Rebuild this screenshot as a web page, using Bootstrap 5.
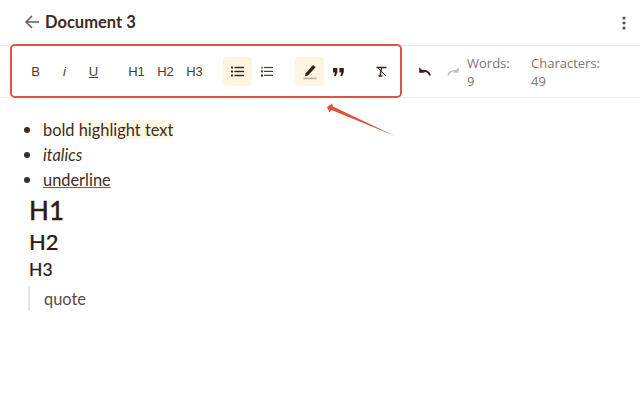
<!DOCTYPE html>
<html lang="en">
<head>
<meta charset="utf-8">
<title>Document 3</title>
<link href="https://cdn.jsdelivr.net/npm/bootstrap@5.3.0/dist/css/bootstrap.min.css" rel="stylesheet">
<style>
html,body{height:100%;}
body{font-family:"Lato","Noto Sans",sans-serif;color:#33221a;background:#fff;overflow:hidden;position:relative;}
.top-bar{height:45px;padding:0 14px 0 24px;}
.top-title{font-size:16.5px;font-weight:700;color:#3a2a22;margin:0 0 0 5px;font-family:"Lato",sans-serif;}
.tool-bar{height:53px;padding-left:21px;border-top:1px solid #efefef;border-bottom:1px solid #efefef;}
.tool-group{display:flex;margin-right:14px;}
.tool-group.tail{margin-right:-1px;}
.tb{width:29px;height:29px;border-radius:4px;display:flex;align-items:center;justify-content:center;font-family:"Liberation Sans",sans-serif;font-size:13px;color:#4a3b33;}
.tb.on{background:#fdf5e0;}
.stats{font-family:"Open Sans",sans-serif;font-size:13px;line-height:18px;color:#7b7674;width:64px;}
.stats.wide{width:90px;}
.doc-body{padding:19px 29px 0;font-size:16.4px;color:#3d2c23;}
.doc-list{padding-left:14px;margin:0;line-height:25px;}
.doc-list li{height:25px;}
.doc-list li::marker{font-size:18px;}
.hl{background:#fdf8e3;}
.under-line{text-decoration:underline;text-decoration-color:#6d5e56;}
.h-a{font-size:26px;font-weight:500;line-height:34px;margin:1px 0 0;color:#2f1c12;-webkit-text-stroke:.3px #2f1c12;}
.h-b{font-size:22px;font-weight:500;line-height:28px;margin:1px 0 0;color:#2f1c12;-webkit-text-stroke:.2px #2f1c12;}
.h-c{font-size:17.5px;font-weight:500;line-height:22px;margin:3px 0 0;color:#2f1c12;-webkit-text-stroke:.15px #2f1c12;}
.quote-box{margin:5px 0 0 -1px;border-left:2px solid #e3e3e3;padding:0 0 0 14px;line-height:25px;color:#5a4a42;}
.red-frame{position:absolute;left:10px;top:44px;width:392px;height:54px;border:2px solid #e0524a;border-radius:5px;pointer-events:none;}
.red-arrow{position:absolute;left:320px;top:100px;}
</style>
</head>
<body>
<header class="top-bar d-flex align-items-center justify-content-between">
  <div class="d-flex align-items-center">
    <svg width="16" height="16" viewBox="0 0 16 16" fill="none" stroke="#6b5f59" stroke-width="1.6"><path d="M15 8H2M8 2L2 8l6 6"/></svg>
    <h1 class="top-title">Document 3</h1>
  </div>
  <svg width="4" height="14" viewBox="0 0 4 14" fill="#5a4c45"><circle cx="2" cy="2" r="1.6"/><circle cx="2" cy="7" r="1.6"/><circle cx="2" cy="12" r="1.6"/></svg>
</header>
<div class="tool-bar d-flex align-items-center">
  <div class="tool-group">
    <div class="tb">B</div><div class="tb fst-italic">i</div><div class="tb text-decoration-underline">U</div>
  </div>
  <div class="tool-group">
    <div class="tb">H1</div><div class="tb">H2</div><div class="tb">H3</div>
  </div>
  <div class="tool-group">
    <div class="tb on"><svg width="13" height="11" viewBox="0 0 13 11" fill="#33221a"><rect x="0" y="0.6" width="2" height="1.8"/><rect x="3.5" y="0.8" width="9.5" height="1.4"/><rect x="0" y="4.6" width="2" height="1.8"/><rect x="3.5" y="4.8" width="9.5" height="1.4"/><rect x="0" y="8.6" width="2" height="1.8"/><rect x="3.5" y="8.8" width="9.5" height="1.4"/></svg></div>
    <div class="tb"><svg width="12" height="11" viewBox="0 0 12 11" fill="#4a3b33"><rect x="0.5" y="0.5" width="1.2" height="2.2"/><rect x="0" y="4.4" width="2" height="2"/><rect x="0" y="8.4" width="2" height="2.2"/><rect x="3" y="0.9" width="9" height="1.2"/><rect x="3" y="4.8" width="9" height="1.2"/><rect x="3" y="8.7" width="9" height="1.2"/></svg></div>
  </div>
  <div class="tool-group">
    <div class="tb on"><svg width="14" height="16" viewBox="0 0 14 16"><path d="M2.5 11L10 2.5l2.6 2.2-7.6 8.4-3 .6z" fill="#33221a" transform="translate(0 -1.5)"/><rect x="0.5" y="13.6" width="13" height="1.6" fill="#b9b1a6"/></svg></div>
    <div class="tb"><svg width="11" height="8" viewBox="0 0 11 8" fill="#33221a"><path d="M0 0h4.4v4.2L2.8 8H1l1-3.4H0zM6.4 0h4.4v4.2L9.2 8H7.4l1-3.4h-2z"/></svg></div>
  </div>
  <div class="tool-group">
    <div class="tb"><svg width="11" height="11" viewBox="0 0 11 11" fill="none" stroke="#33221a" stroke-width="1.3"><path d="M0.5 1.5h10M5.5 1.5L4.2 9.5M2.5 10h4"/><path d="M1 1l9 9" stroke-width="1"/></svg></div>
  </div>
  <div class="tool-group tail">
    <div class="tb"><svg width="13" height="9" viewBox="0 0 13 9" fill="none" stroke="#33221a" stroke-width="1.9"><path d="M12 8.5C11 4.5 7 2.8 2.5 4.4"/><path d="M1.2 0.2v5.6h5.6" stroke="none" fill="#33221a"/></svg></div>
    <div class="tb"><svg width="13" height="9" viewBox="0 0 13 9" fill="none" stroke="#c4c1bf" stroke-width="1.5"><path d="M1 8.5C2 4.5 6 2.8 10.5 4.4"/><path d="M11.8 0.2v5.6H6.2" stroke="none" fill="#c4c1bf"/></svg></div>
  </div>
  <div class="stats">Words:<br>9</div>
  <div class="stats wide">Characters:<br>49</div>
</div>
<main class="doc-body">
  <ul class="doc-list">
    <li>bold <span class="hl">highlight text</span></li>
    <li class="fst-italic">italics</li>
    <li class="under-line">underline</li>
  </ul>
  <h2 class="h-a">H1</h2>
  <h3 class="h-b">H2</h3>
  <h4 class="h-c">H3</h4>
  <blockquote class="quote-box">quote</blockquote>
</main>
<div class="red-frame"></div>
<svg class="red-arrow" width="80" height="40" viewBox="0 0 80 40"><path d="M7 7L12 3.5 13 6.5 75 36 11.5 10 9.5 12.5z" fill="#e0523f"/></svg>
<script src="https://cdn.jsdelivr.net/npm/bootstrap@5.3.0/dist/js/bootstrap.bundle.min.js"></script>
</body>
</html>
